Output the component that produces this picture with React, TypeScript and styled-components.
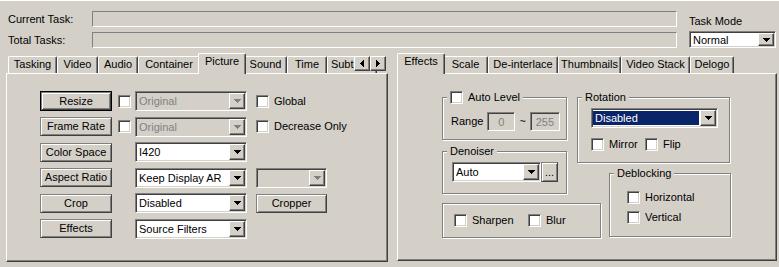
import styled, { createGlobalStyle } from "styled-components";

const FACE = "#d4d0c8";
const SHADOW = "#808080";
const DARK = "#404040";

const GlobalStyle = createGlobalStyle`
  html, body { margin: 0; padding: 0; background: ${FACE}; }
  body {
    font-family: "Liberation Sans", Arial, sans-serif;
    font-size: 11px;
    color: #000;
  }
  * { box-sizing: border-box; }
`;

const Window = styled.div`
  width: 779px;
  height: 267px;
  overflow: hidden;
  background: ${FACE};
  border-top: 1px solid #fff;
`;

const Header = styled.div`
  display: flex;
  height: 52px;
  padding: 10px 0 0 8px;
`;

const StatusGrid = styled.div`
  display: grid;
  grid-template-columns: 84px 585px;
  grid-auto-rows: 16px;
  row-gap: 5px;
  align-items: center;
`;

const Label = styled.span`
  line-height: 13px;
  white-space: nowrap;
`;

const ProgressField = styled.div`
  height: 16px;
  border: 1px solid;
  border-color: ${SHADOW} #fff #fff ${SHADOW};
`;

const TaskMode = styled.div`
  margin-left: 12px;
  width: 87px;
  height: 37px;
  display: flex;
  flex-direction: column;
  justify-content: space-between;
  padding-top: 4px;
`;

const TabsArea = styled.div`
  display: flex;
  gap: 9px;
  padding-left: 6px;
`;

const TabControl = styled.div<{ $w: number }>`
  width: ${(p) => p.$w}px;
  display: flex;
  flex-direction: column;
`;

const TabStrip = styled.div`
  position: relative;
  height: 20px;
  display: flex;
  align-items: flex-end;
  padding-left: 2px;
`;

const Tab = styled.div<{ $w: number; $active?: boolean }>`
  flex: none;
  position: relative;
  z-index: ${(p) => (p.$active ? 2 : 0)};
  width: ${(p) => (p.$active ? p.$w + 4 : p.$w)}px;
  height: ${(p) => (p.$active ? 21 : 17)}px;
  margin: 0 ${(p) => (p.$active ? -2 : 0)}px ${(p) => (p.$active ? -1 : 0)}px;
  padding-top: 1px;
  background: ${FACE};
  border-top: 1px solid #fff;
  border-left: 1px solid #fff;
  border-right: 1px solid ${DARK};
  border-radius: 2px 2px 0 0;
  box-shadow: inset -1px 0 0 ${SHADOW};
  display: flex;
  justify-content: center;
  line-height: 13px;
  white-space: nowrap;
  overflow: hidden;
`;

const ScrollPair = styled.div`
  position: absolute;
  right: 2px;
  top: 3px;
  z-index: 3;
  display: flex;
`;

const Raised = styled.div`
  background: ${FACE};
  border: 1px solid;
  border-color: #fff ${DARK} ${DARK} #fff;
  box-shadow: inset -1px -1px 0 ${SHADOW};
  display: flex;
  align-items: center;
  justify-content: center;
`;

const ScrollBtn = styled(Raised)`
  width: 16px;
  height: 15px;
`;

const Panel = styled.div<{ $h: number }>`
  position: relative;
  z-index: 1;
  height: ${(p) => p.$h}px;
  border: 1px solid;
  border-color: #fff ${DARK} ${DARK} #fff;
  box-shadow: inset -1px -1px 0 ${SHADOW};
`;

/* ---- controls ---- */

const PushButton = styled.div<{ $w: number; $h?: number; $default?: boolean }>`
  width: ${(p) => p.$w}px;
  height: ${(p) => p.$h ?? (p.$default ? 20 : 19)}px;
  display: flex;
  align-items: center;
  justify-content: center;
  line-height: 13px;
  white-space: nowrap;
  background: ${FACE};
  border: 1px solid;
  border-color: ${(p) => (p.$default ? "#000" : `${SHADOW} ${DARK} ${DARK} ${SHADOW}`)};
  box-shadow: ${(p) =>
    p.$default
      ? `inset 1px 1px 0 ${SHADOW}, inset -1px -1px 0 ${DARK}, inset 2px 2px 0 #fff, inset -2px -2px 0 ${SHADOW}`
      : `inset 1px 1px 0 #fff, inset -1px -1px 0 ${SHADOW}`};
`;

const CheckBox = styled.span`
  flex: none;
  display: inline-block;
  width: 13px;
  height: 13px;
  background: #fff;
  border: 1px solid;
  border-color: ${SHADOW} #fff #fff ${SHADOW};
  box-shadow: inset 1px 1px 0 ${DARK}, inset -1px -1px 0 ${FACE};
`;

const CheckItem = styled.label<{ $w?: number }>`
  display: flex;
  align-items: center;
  gap: 5px;
  line-height: 13px;
  white-space: nowrap;
  ${(p) => (p.$w ? `width: ${p.$w}px;` : "")}
`;

const ComboBox = styled.div<{ $w: number; $h?: number; $disabled?: boolean }>`
  width: ${(p) => p.$w}px;
  height: ${(p) => p.$h ?? 20}px;
  display: flex;
  padding: 1px;
  background: ${(p) => (p.$disabled ? FACE : "#fff")};
  border: 1px solid;
  border-color: ${SHADOW} #fff #fff ${SHADOW};
  box-shadow: inset 1px 1px 0 ${DARK}, inset -1px -1px 0 ${FACE};
`;

const ComboText = styled.div<{ $disabled?: boolean; $selected?: boolean }>`
  flex: 1;
  display: flex;
  align-items: center;
  padding-left: 2px;
  margin: 1px 1px 1px 0;
  white-space: nowrap;
  overflow: hidden;
  color: ${(p) => (p.$disabled ? SHADOW : p.$selected ? "#fff" : "#000")};
  background: ${(p) => (p.$selected ? "#0a246a" : "transparent")};
`;

const DropBtn = styled(Raised)`
  width: 16px;
  flex: none;
`;

const TextInput = styled.div<{ $w: number }>`
  width: ${(p) => p.$w}px;
  height: 19px;
  display: flex;
  align-items: center;
  justify-content: center;
  color: ${SHADOW};
  background: ${FACE};
  border: 1px solid;
  border-color: ${SHADOW} #fff #fff ${SHADOW};
  box-shadow: inset 1px 1px 0 ${DARK}, inset -1px -1px 0 ${FACE};
`;

function ArrowDown({ color = "#000" }: { color?: string }) {
  return (
    <svg width="7" height="4" viewBox="0 0 7 4" shapeRendering="crispEdges">
      <rect x="0" y="0" width="7" height="1" fill={color} />
      <rect x="1" y="1" width="5" height="1" fill={color} />
      <rect x="2" y="2" width="3" height="1" fill={color} />
      <rect x="3" y="3" width="1" height="1" fill={color} />
    </svg>
  );
}

function ArrowSide({ dir }: { dir: "left" | "right" }) {
  const rows = [
    [3, 0, 1, 7],
    [2, 1, 1, 5],
    [1, 2, 1, 3],
    [0, 3, 1, 1],
  ];
  return (
    <svg width="4" height="7" viewBox="0 0 4 7" shapeRendering="crispEdges">
      {rows.map(([x, y, w, h], i) => (
        <rect key={i} x={dir === "left" ? x : 3 - x} y={y} width={w} height={h} fill="#000" />
      ))}
    </svg>
  );
}

function Combo({
  w,
  h,
  text,
  disabled,
  selected,
}: {
  w: number;
  h?: number;
  text: string;
  disabled?: boolean;
  selected?: boolean;
}) {
  return (
    <ComboBox $w={w} $h={h} $disabled={disabled}>
      <ComboText $disabled={disabled} $selected={selected}>
        {text}
      </ComboText>
      <DropBtn>
        <ArrowDown color={disabled ? SHADOW : "#000"} />
      </DropBtn>
    </ComboBox>
  );
}

/* ---- left page ---- */

const PictureGrid = styled.div`
  display: grid;
  grid-template-columns: 78px 17px 121px auto;
  grid-auto-rows: 20px;
  row-gap: 5.6px;
  align-items: center;
  padding: 17px 0 0 33px;
`;

/* ---- right page ---- */

const EffectsLayout = styled.div`
  display: flex;
  padding: 23px 0 0 44px;
`;

const Column = styled.div<{ $w?: number; $ml?: number }>`
  display: flex;
  flex-direction: column;
  align-items: flex-start;
  ${(p) => (p.$w ? `width: ${p.$w}px;` : "")}
  margin-left: ${(p) => p.$ml ?? 0}px;
`;

const GroupBox = styled.div<{
  $w?: number;
  $h: number;
  $mt?: number;
  $ml?: number;
  $pad: string;
  $gap?: number;
  $row?: boolean;
}>`
  position: relative;
  flex: none;
  width: ${(p) => (p.$w ? `${p.$w}px` : "100%")};
  height: ${(p) => p.$h}px;
  margin-top: ${(p) => p.$mt ?? 0}px;
  margin-left: ${(p) => p.$ml ?? 0}px;
  padding: ${(p) => p.$pad};
  border: 1px solid ${SHADOW};
  box-shadow: inset 1px 1px 0 #fff, 1px 1px 0 #fff;
  display: flex;
  flex-direction: ${(p) => (p.$row ? "row" : "column")};
  align-items: flex-start;
  gap: ${(p) => p.$gap ?? 0}px;
`;

const Legend = styled.div`
  position: absolute;
  top: -7px;
  left: 4px;
  padding: 0 3px;
  background: ${FACE};
  display: flex;
  align-items: center;
  gap: 5px;
  height: 13px;
  line-height: 13px;
  white-space: nowrap;
`;

const InlineRow = styled.div<{ $gap?: number }>`
  display: flex;
  align-items: center;
  gap: ${(p) => p.$gap ?? 4}px;
`;

const pictureTabs: [string, number][] = [
  ["Tasking", 49],
  ["Video", 41],
  ["Audio", 40],
  ["Container", 62],
  ["Picture", 44],
  ["Sound", 43],
  ["Time", 40],
  ["Subtitles", 50],
];

const effectTabs: [string, number][] = [
  ["Effects", 44],
  ["Scale", 45],
  ["De-interlace", 70],
  ["Thumbnails", 63],
  ["Video Stack", 69],
  ["Delogo", 44],
];

export default function App() {
  return (
    <>
      <GlobalStyle />
      <Window>
        <Header>
          <StatusGrid>
            <Label>Current Task:</Label>
            <ProgressField />
            <Label>Total Tasks:</Label>
            <ProgressField />
          </StatusGrid>
          <TaskMode>
            <Label>Task Mode</Label>
            <Combo w={87} h={17} text="Normal" />
          </TaskMode>
        </Header>

        <TabsArea>
          <TabControl $w={382}>
            <TabStrip>
              {pictureTabs.map(([name, w]) => (
                <Tab key={name} $w={w} $active={name === "Picture"}>
                  {name}
                </Tab>
              ))}
              <ScrollPair>
                <ScrollBtn>
                  <ArrowSide dir="left" />
                </ScrollBtn>
                <ScrollBtn>
                  <ArrowSide dir="right" />
                </ScrollBtn>
              </ScrollPair>
            </TabStrip>
            <Panel $h={189}>
              <PictureGrid>
                <PushButton $w={72} $default>Resize</PushButton>
                <CheckBox />
                <Combo w={112} text="Original" disabled />
                <CheckItem>
                  <CheckBox />
                  Global
                </CheckItem>

                <PushButton $w={72}>Frame Rate</PushButton>
                <CheckBox />
                <Combo w={112} text="Original" disabled />
                <CheckItem>
                  <CheckBox />
                  Decrease Only
                </CheckItem>

                <PushButton $w={72}>Color Space</PushButton>
                <span />
                <Combo w={112} text="I420" />
                <span />

                <PushButton $w={72}>Aspect Ratio</PushButton>
                <span />
                <Combo w={112} text="Keep Display AR" />
                <Combo w={71} text="" disabled />

                <PushButton $w={72}>Crop</PushButton>
                <span />
                <Combo w={112} text="Disabled" />
                <PushButton $w={71}>Cropper</PushButton>

                <PushButton $w={72}>Effects</PushButton>
                <span />
                <Combo w={112} text="Source Filters" />
                <span />
              </PictureGrid>
            </Panel>
          </TabControl>

          <TabControl $w={380}>
            <TabStrip>
              {effectTabs.map(([name, w]) => (
                <Tab key={name} $w={w} $active={name === "Effects"}>
                  {name}
                </Tab>
              ))}
            </TabStrip>
            <Panel $h={188}>
              <EffectsLayout>
                <Column $w={125}>
                  <GroupBox $h={43} $pad="14px 0 0 8px">
                    <Legend>
                      <CheckBox />
                      Auto Level
                    </Legend>
                    <InlineRow>
                      <Label>Range</Label>
                      <TextInput $w={28}>0</TextInput>
                      <Label>~</Label>
                      <TextInput $w={30}>255</TextInput>
                    </InlineRow>
                  </GroupBox>
                  <GroupBox $h={43} $mt={11} $pad="10px 0 0 9px">
                    <Legend>Denoiser</Legend>
                    <InlineRow $gap={0}>
                      <Combo w={89} text="Auto" />
                      <PushButton $w={17} $h={20}>
                        ...
                      </PushButton>
                    </InlineRow>
                  </GroupBox>
                  <GroupBox $w={159} $h={35} $mt={9} $pad="10px 0 0 11px" $row>
                    <CheckItem $w={74}>
                      <CheckBox />
                      Sharpen
                    </CheckItem>
                    <CheckItem>
                      <CheckBox />
                      Blur
                    </CheckItem>
                  </GroupBox>
                </Column>

                <Column $ml={10}>
                  <GroupBox $w={153} $h={66} $pad="10px 0 0 13px" $gap={10}>
                    <Legend>Rotation</Legend>
                    <Combo w={127} text="Disabled" selected />
                    <InlineRow $gap={0}>
                      <CheckItem $w={54}>
                        <CheckBox />
                        Mirror
                      </CheckItem>
                      <CheckItem>
                        <CheckBox />
                        Flip
                      </CheckItem>
                    </InlineRow>
                  </GroupBox>
                  <GroupBox $w={122} $h={64} $mt={10} $ml={32} $pad="17px 0 0 17px" $gap={7}>
                    <Legend>Deblocking</Legend>
                    <CheckItem>
                      <CheckBox />
                      Horizontal
                    </CheckItem>
                    <CheckItem>
                      <CheckBox />
                      Vertical
                    </CheckItem>
                  </GroupBox>
                </Column>
              </EffectsLayout>
            </Panel>
          </TabControl>
        </TabsArea>
      </Window>
    </>
  );
}
